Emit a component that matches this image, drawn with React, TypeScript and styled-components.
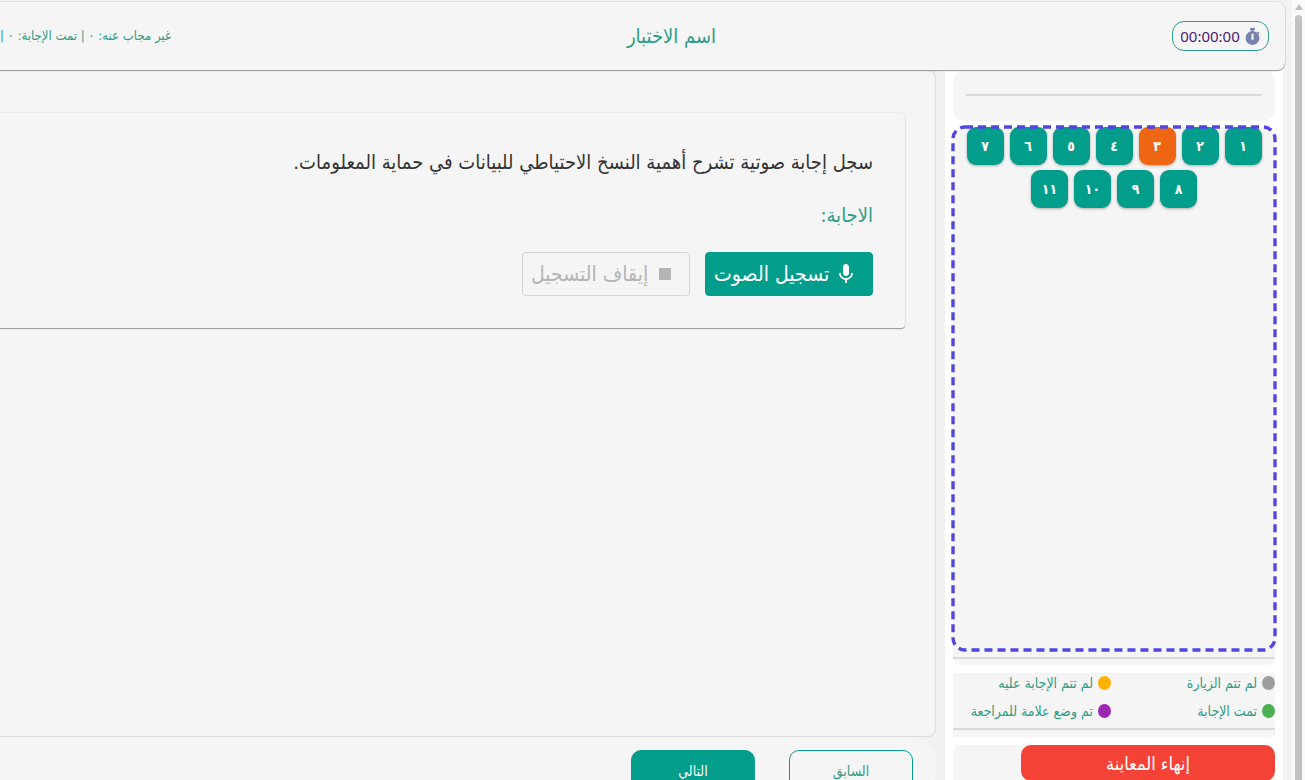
import React from 'react';
import styled, { createGlobalStyle } from 'styled-components';
import { FaStopwatch } from 'react-icons/fa';
import { MdMic, MdStop } from 'react-icons/md';

const teal = '#039d8c';
const tealText = '#2f9c86';

const GlobalStyle = createGlobalStyle`
  * { box-sizing: border-box; }
  body {
    margin: 0;
    background: #f3f3f3;
    font-family: "DejaVu Sans Condensed", "DejaVu Sans", sans-serif;
  }
  button { font-family: inherit; cursor: pointer; }
`;

const Page = styled.div`
  display: flex;
  height: 100vh;
  overflow: hidden;
`;

const ScrollTrack = styled.div`
  display: flex;
  flex: none;
  flex-direction: column;
  align-items: center;
  gap: 5px;
  width: 13px;
  padding-top: 4px;
  background: #fafafa;
`;

const ScrollArrow = styled.div`
  border: 4px solid transparent;
  border-top-width: 0;
  border-bottom: 6px solid #bdbdbd;
`;

const ScrollThumb = styled.div`
  flex: 1;
  width: 7px;
  border-radius: 4px 4px 0 0;
  background: #c1c1c1;
`;

const Shell = styled.div`
  display: flex;
  flex: 1;
  flex-direction: column;
  min-width: 0;
  height: calc(100vh + 16px);
`;

const Header = styled.header`
  display: flex;
  flex: none;
  align-items: center;
  position: relative;
  z-index: 1;
  height: 68px;
  margin: 2px 7px 0 0;
  padding-right: 16px;
  border-radius: 0 8px 8px 0;
  background: #f5f5f5;
  box-shadow: 0 1px 1px #999, 0 0 1px 1px #dedede;
`;

const Timer = styled.div`
  display: flex;
  align-items: center;
  justify-content: center;
  gap: 4px;
  width: 97px;
  height: 30px;
  border: 1px solid #2a9d8f;
  border-radius: 12px;
  color: #7783ad;
`;

const Clock = styled.span`
  color: #4a1a70;
  font-family: "Noto Sans", "Open Sans", sans-serif;
  font-size: 15px;
  line-height: 20px;
`;

const Title = styled.h1`
  flex: 1;
  margin: 0;
  color: ${tealText};
  font-size: 20px;
  font-weight: 400;
  line-height: 28px;
  text-align: center;
`;

const Counts = styled.div`
  flex: none;
  width: 171px;
  overflow: hidden;
  color: ${tealText};
  font-size: 13px;
  line-height: 20px;
  white-space: nowrap;
`;

const Body = styled.div`
  display: flex;
  flex: 1;
  min-height: 0;
`;

const Sidebar = styled.aside`
  display: flex;
  flex: none;
  flex-direction: column;
  gap: 8px;
  width: 338px;
  margin-right: 9px;
  padding: 0 8px;
  background: #fff;
`;

const Rule = styled.hr`
  width: 100%;
  height: 2px;
  margin: 0;
  border: 0;
  background: #d9d9d9;
`;

const InfoPanel = styled.section`
  flex: none;
  height: 51px;
  padding: 24px 13px 0;
  border-radius: 12px;
  background: #f5f5f5;
`;

const QuestionPanel = styled.section`
  display: flex;
  flex: 1;
  flex-direction: column;
  gap: 6px;
  margin-top: -2px;
  padding-bottom: 6px;
  border-radius: 12px 12px 8px 8px;
  background: #f5f5f5;
`;

const QuestionGrid = styled.div`
  position: relative;
  display: flex;
  flex: 1;
  flex-wrap: wrap;
  align-content: flex-start;
  justify-content: center;
  gap: 5px 6px;
  padding: 0 12px;
`;

const DashedFrame = styled.svg`
  position: absolute;
  inset: 0;
  width: 100%;
  height: calc(100% - 1px);
  overflow: visible;
  pointer-events: none;
`;

const QuestionButton = styled.button<{ $current?: boolean }>`
  width: 37px;
  height: 38px;
  padding: 0;
  border: 0;
  border-radius: 9px;
  background: ${(p) => (p.$current ? '#ee6611' : teal)};
  box-shadow: 0 1px 3px rgba(0, 0, 0, 0.3);
  color: #fff;
  font-size: 14px;
  font-weight: 700;
`;

const LegendPanel = styled.section`
  display: flex;
  flex: none;
  flex-direction: column;
  justify-content: space-between;
  height: 64px;
  padding-bottom: 7px;
  background: #f5f5f5;
`;

const LegendList = styled.ul`
  display: grid;
  grid-template-columns: 1fr 1fr;
  gap: 8px 6px;
  margin: 0;
  padding: 0;
  list-style: none;
`;

const LegendItem = styled.li`
  display: flex;
  align-items: center;
  gap: 5px;
  color: ${tealText};
  font-size: 14px;
  line-height: 20px;
  white-space: nowrap;
`;

const Dot = styled.span<{ $color: string }>`
  flex: none;
  width: 13px;
  height: 14px;
  border-radius: 50%;
  background: ${(p) => p.$color};
`;

const EndPanel = styled.section`
  flex: none;
  height: 51px;
  border-radius: 8px;
  background: #f5f5f5;
`;

const EndButton = styled.button`
  width: 254px;
  height: 36px;
  border: 0;
  border-radius: 10px;
  background: #f44336;
  color: #fff;
  font-size: 18px;
`;

const Content = styled.div`
  display: flex;
  flex: 1;
  flex-direction: column;
  gap: 1px;
  min-width: 0;
  padding-right: 9px;
  background: #f1f1f1;
`;

const Main = styled.main`
  flex: 1;
  padding: 42px 30px 0 0;
  border: 1px solid #dedede;
  border-left: 0;
  border-radius: 0 8px 8px 0;
  background: #f5f5f5;
`;

const Card = styled.section`
  display: flex;
  flex-direction: column;
  gap: 20px;
  padding: 32px;
  border-radius: 0 4px 4px 0;
  background: #f5f5f5;
  box-shadow: 0 1px 1px #999, 0 0 1px 1px #ebebeb;
`;

const Question = styled.p`
  margin: 0;
  color: #333;
  font-size: 20px;
  line-height: 34px;
`;

const AnswerLabel = styled.h2`
  margin: 0;
  color: ${tealText};
  font-size: 20px;
  font-weight: 400;
  line-height: 33px;
`;

const Recorder = styled.div`
  display: flex;
  gap: 15px;
`;

const RecordButton = styled.button<{ $outlined?: boolean }>`
  display: flex;
  align-items: center;
  justify-content: flex-end;
  gap: 5px;
  width: 168px;
  height: 44px;
  padding: 0 8px;
  border: 1px solid ${(p) => (p.$outlined ? '#d4d4d4' : teal)};
  border-radius: 4px;
  background: ${(p) => (p.$outlined ? 'transparent' : teal)};
  color: ${(p) => (p.$outlined ? '#b4b4b4' : '#fff')};
  font-size: 21px;
  line-height: 32px;
  white-space: nowrap;
`;

const Footer = styled.footer`
  display: flex;
  flex: none;
  gap: 34px;
  height: 58px;
  padding: 12px 23px 0 0;
  border-radius: 0 24px 24px 0;
  background: #f5f5f5;
`;

const NavButton = styled.button<{ $primary?: boolean }>`
  width: 124px;
  height: 42px;
  border: 1px solid ${teal};
  border-radius: 10px;
  background: ${(p) => (p.$primary ? teal : 'transparent')};
  color: ${(p) => (p.$primary ? '#fff' : tealText)};
  font-size: 14px;
`;

const numbers = ['١', '٢', '٣', '٤', '٥', '٦', '٧', '٨', '٩', '١٠', '١١'];

const legend = [
  { label: 'لم تتم الزيارة', color: '#9e9e9e' },
  { label: 'لم تتم الإجابة عليه', color: '#ffb300' },
  { label: 'تمت الإجابة', color: '#4caf50' },
  { label: 'تم وضع علامة للمراجعة', color: '#9c27b0' },
];

export default function App() {
  return (
    <Page dir="rtl" lang="ar">
      <GlobalStyle />
      <ScrollTrack aria-hidden="true">
        <ScrollArrow />
        <ScrollThumb />
      </ScrollTrack>
      <Shell>
        <Header>
          <Timer>
            <FaStopwatch size={17} />
            <Clock>00:00:00</Clock>
          </Timer>
          <Title>اسم الاختبار</Title>
          <Counts>غير مجاب عنه: ٠ | تمت الإجابة: ٠ |</Counts>
        </Header>
        <Body>
          <Sidebar>
            <InfoPanel>
              <Rule />
            </InfoPanel>
            <QuestionPanel>
              <QuestionGrid>
                {numbers.map((n) => (
                  <QuestionButton key={n} $current={n === '٣'}>
                    {n}
                  </QuestionButton>
                ))}
                <DashedFrame aria-hidden="true">
                  <rect
                    width="100%"
                    height="100%"
                    rx="12"
                    fill="none"
                    stroke="#5246de"
                    strokeWidth="3.4"
                    strokeDasharray="8 5"
                  />
                </DashedFrame>
              </QuestionGrid>
              <Rule />
            </QuestionPanel>
            <LegendPanel>
              <LegendList>
                {legend.map((item) => (
                  <LegendItem key={item.label}>
                    <Dot $color={item.color} />
                    {item.label}
                  </LegendItem>
                ))}
              </LegendList>
              <Rule />
            </LegendPanel>
            <EndPanel>
              <EndButton>إنهاء المعاينة</EndButton>
            </EndPanel>
          </Sidebar>
          <Content>
            <Main>
              <Card>
                <Question>سجل إجابة صوتية تشرح أهمية النسخ الاحتياطي للبيانات في حماية المعلومات.</Question>
                <AnswerLabel>الاجابة:</AnswerLabel>
                <Recorder>
                  <RecordButton>
                    <MdMic size={24} />
                    تسجيل الصوت
                  </RecordButton>
                  <RecordButton $outlined disabled>
                    <MdStop size={24} />
                    إيقاف التسجيل
                  </RecordButton>
                </Recorder>
              </Card>
            </Main>
            <Footer>
              <NavButton>السابق</NavButton>
              <NavButton $primary>التالي</NavButton>
            </Footer>
          </Content>
        </Body>
      </Shell>
    </Page>
  );
}
